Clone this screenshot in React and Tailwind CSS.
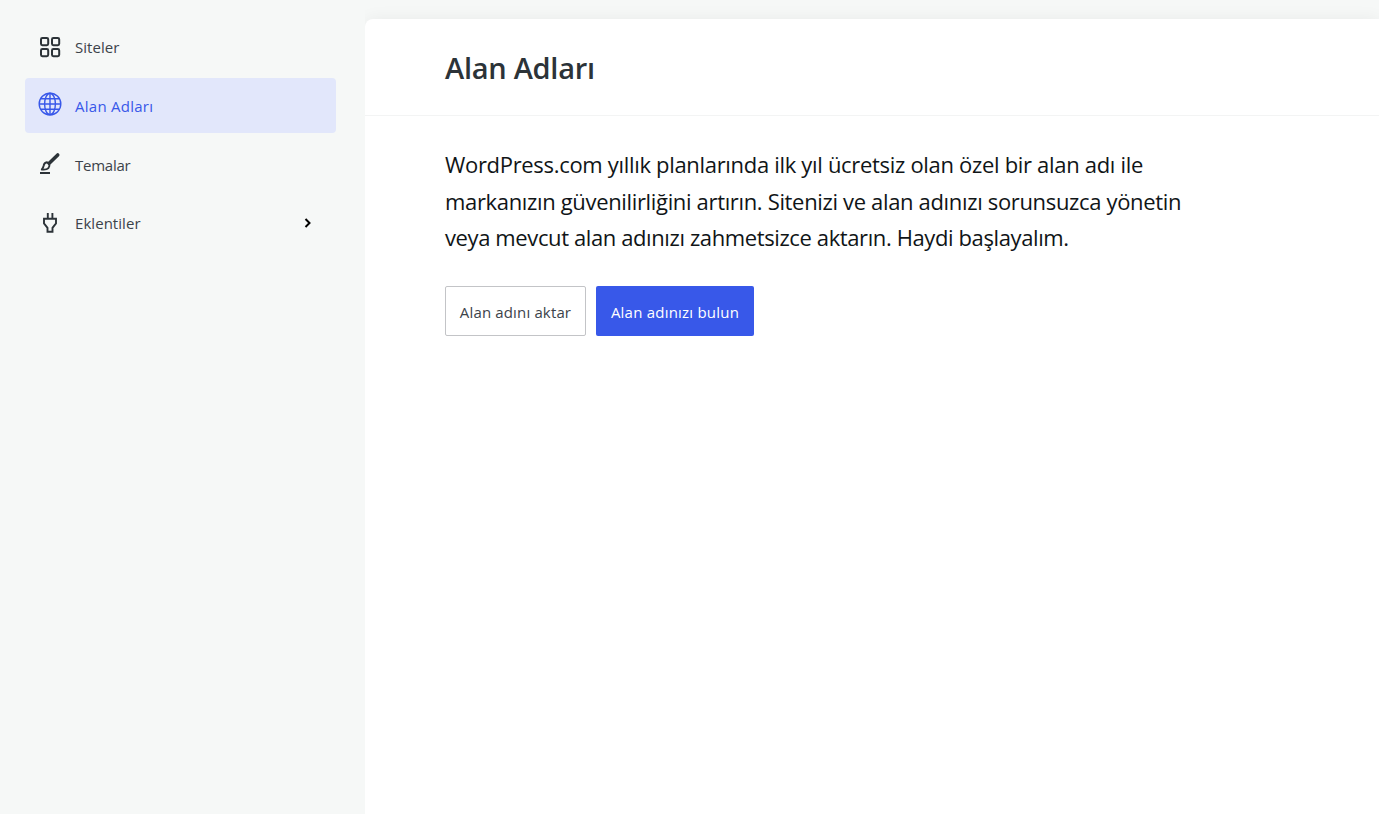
const stroke = { fill: 'none', stroke: 'currentColor' };

function SitesIcon() {
  return (
    <svg width="24" height="24" viewBox="0 0 24 24" {...stroke} strokeWidth="2">
      <rect x="3" y="3" width="7.2" height="7.2" rx="1.4" />
      <rect x="14" y="3" width="7.2" height="7.2" rx="1.4" />
      <rect x="3" y="14" width="7.2" height="7.2" rx="1.4" />
      <rect x="14" y="14" width="7.2" height="7.2" rx="1.4" />
    </svg>
  );
}

function GlobeIcon() {
  return (
    <svg width="24" height="24" viewBox="0 0 24 24" {...stroke} strokeWidth="1.4">
      <circle cx="12" cy="12" r="10.8" />
      <ellipse cx="12" cy="12" rx="5.4" ry="10.8" />
      <path d="M12 1v22M1 12h22M2.8 6.8h18.4M2.8 17.2h18.4" />
    </svg>
  );
}

function BrushIcon() {
  return (
    <svg width="24" height="24" viewBox="0 0 24 24">
      <path d="M11.2 11.2 19.700 3" fill="none" stroke="currentColor" strokeWidth="3.6" strokeLinecap="round" />
      <path d="M9 10.300c-1.900.4-3 1.500-3.300 3.200-.3 1.500-.6 2.600-1.900 4 2.500.3 5.300 0 6.600-1.400 1.200-1.300 1.300-2.700.8-4z" fill="none" stroke="currentColor" strokeWidth="1.9" strokeLinejoin="round" />
      <path d="M2 21h10" stroke="currentColor" strokeWidth="2" />
    </svg>
  );
}

function PlugIcon() {
  return (
    <svg width="24" height="24" viewBox="0 0 24 24" {...stroke} strokeWidth="1.9">
      <path d="M9.800 2v5.500M14.400 2v5.500M6 7.700h12v4.700l-3.500 4.400v3.900h-5v-3.900L6 12.400z" />
    </svg>
  );
}

const items = [
  { label: 'Siteler', Icon: SitesIcon, box: 'text-[#2c3338]', text: 'tracking-[0.05px] text-[#3c434a]' },
  { label: 'Alan Adları', Icon: GlobeIcon, box: 'bg-[#e2e7fb] text-[#3858e9]', text: 'tracking-[0.26px]', lift: 'mb-[3px]' },
  { label: 'Temalar', Icon: BrushIcon, box: 'text-[#2c3338]', text: 'tracking-[-0.25px] text-[#3c434a]' },
  { label: 'Eklentiler', Icon: PlugIcon, box: 'text-[#2c3338]', text: 'tracking-[0.05px] text-[#3c434a]', more: true },
];

export default function App() {
  return (
    <div className="flex h-screen w-full overflow-hidden bg-[#f6f8f7] font-['Open_Sans','Noto_Sans',sans-serif]">
      <aside className="w-[365px] shrink-0 pt-[19px] pl-[25px]">
        <nav className="flex w-[311px] flex-col gap-[3.700px]">
          {items.map(({ label, Icon, box, text, lift, more }) => (
            <a key={label} className={`flex h-[55px] items-center rounded px-[13px] ${box}`}>
              <span className={`shrink-0 ${lift || ''}`}><Icon /></span>
              <span className={`ml-[13px] pt-[2px] text-[15px] ${text}`}>{label}</span>
              {more && (
                <svg className="mr-[8px] ml-auto text-black" width="14" height="14" viewBox="0 0 14 14" {...stroke} strokeWidth="2">
                  <path d="m4.500 3 4 4-4 4" />
                </svg>
              )}
            </a>
          ))}
        </nav>
      </aside>
      <div className="flex min-w-0 flex-1 overflow-hidden pt-[19px]">
        <main className="min-w-0 flex-1 rounded-tl-[8px] bg-white shadow-[0_0_17px_rgba(0,0,0,0.06)]">
          <header className="flex h-[97px] items-center border-b border-[#f3f4f4] pt-[2px] pl-[80px]">
            <h1 className="text-[29px] font-semibold tracking-[-0.27px] text-[#2c3338]">Alan Adları</h1>
          </header>
          <section className="pt-[30px] pl-[80px]">
            <p className="text-[22px] leading-[36.500px] whitespace-nowrap text-[#101517]">
              <span className="block tracking-[-0.315px]">WordPress.com yıllık planlarında ilk yıl ücretsiz olan özel bir alan adı ile</span>
              <span className="block tracking-[-0.34px]">markanızın güvenilirliğini artırın. Sitenizi ve alan adınızı sorunsuzca yönetin</span>
              <span className="block tracking-[-0.39px]">veya mevcut alan adınızı zahmetsizce aktarın. Haydi başlayalım.</span>
            </p>
            <div className="mt-[30.500px] flex gap-[10px] text-[15px] whitespace-nowrap">
              <button className="flex h-[50px] w-[141px] items-center justify-center rounded-[2px] border border-[#c3c4c7] pt-[2px] tracking-[0.15px] text-[#3c434a]">Alan adını aktar</button>
              <button className="flex h-[50px] w-[158px] items-center justify-center rounded-[2px] bg-[#3858e9] pt-[2px] tracking-[0.220px] text-white">Alan adınızı bulun</button>
            </div>
          </section>
        </main>
      </div>
    </div>
  );
}
